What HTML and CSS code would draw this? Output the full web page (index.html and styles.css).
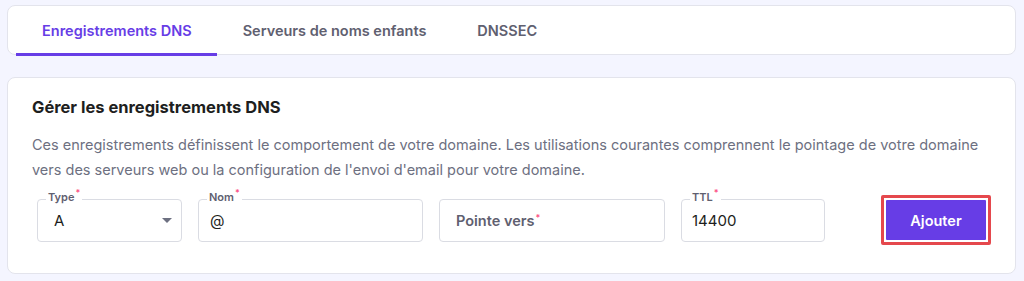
FILE: index.html
```html
<!DOCTYPE html>
<html lang="fr">
<head>
  <meta charset="UTF-8" />
  <meta name="viewport" content="width=device-width, initial-scale=1" />
  <title>DNS</title>
  <link rel="stylesheet" href="styles.css">
</head>
<body>
  <nav class="tabs">
    <a class="tab active">Enregistrements DNS</a>
    <a class="tab">Serveurs de noms enfants</a>
    <a class="tab">DNSSEC</a>
  </nav>

  <section class="card">
    <h2>Gérer les enregistrements DNS</h2>
    <p>Ces enregistrements définissent le comportement de votre domaine. Les utilisations courantes comprennent le pointage de votre domaine vers des serveurs web ou la configuration de l'envoi d'email pour votre domaine.</p>

    <form class="fields">
      <div class="field field-type">
        <span class="label">Type<sup>*</sup></span>
        <span class="value">A</span>
        <svg class="caret" width="10" height="5" viewBox="0 0 10 5"><path d="M0 0h10L5 5z" fill="#6d7081"/></svg>
      </div>
      <div class="field field-name">
        <span class="label">Nom<sup>*</sup></span>
        <span class="value">@</span>
      </div>
      <div class="field field-target">
        <span class="placeholder">Pointe vers<sup>*</sup></span>
      </div>
      <div class="field field-ttl">
        <span class="label">TTL<sup>*</sup></span>
        <span class="value">14400</span>
      </div>
      <div class="btn-wrap">
        <button type="button">Ajouter</button>
      </div>
    </form>
  </section>
</body>
</html>
```

FILE: styles.css
```css
body {
  margin: 0;
  padding: 5px 8px 0 7px;
  background: #f4f5ff;
  font-family: Inter, "Noto Sans", sans-serif;
  color: #1d1e20;
}

.tabs {
  display: flex;
  height: 48px;
  padding: 0 8px;
  background: #fff;
  border: 1px solid #e3e4ec;
  border-radius: 8px;
}

.tab {
  display: flex;
  align-items: center;
  padding: 1px 25px 0 26px;
  font-size: 14.5px;
  font-weight: 600;
  color: #5f6070;
  border-bottom: 3px solid transparent;
  margin-bottom: -2px;
}

.tab.active {
  color: #673de6;
  border-bottom-color: #673de6;
}

.card {
  margin-top: 22px;
  padding: 16px 24px 28px 24px;
  background: #fff;
  border: 1px solid #e3e4ec;
  border-radius: 8px;
}

h2 {
  margin: 0;
  font-size: 16.5px;
  line-height: 26px;
  font-weight: 700;
}

p {
  margin: 12px 0 0;
  font-size: 14.5px;
  line-height: 25px;
  color: #6d7081;
}

.fields {
  display: flex;
  align-items: center;
  margin-top: 13px;
  padding-left: 5px;
  gap: 16px;
}

.field {
  position: relative;
  height: 43px;
  box-sizing: border-box;
  border: 1px solid #dadce3;
  border-radius: 4px;
  display: flex;
  align-items: center;
  padding: 0 16px;
}

.field-type { width: 145px; }
.field-name { width: 225px; padding-left: 11px; }
.field-target { width: 226px; }
.field-ttl { width: 144px; padding-left: 10px; }

.label {
  position: absolute;
  top: -10px;
  left: 8px;
  padding: 0 2px;
  background: #fff;
  font-size: 11px;
  line-height: 14px;
  font-weight: 600;
  color: #5f6070;
}

sup {
  color: #fc5185;
  font-size: 9px;
  line-height: 0;
  vertical-align: 5px;
  margin-left: 1px;
}

.value {
  font-size: 15px;
  color: #1d1e20;
  padding-top: 1px;
}

.placeholder {
  font-size: 14.5px;
  font-weight: 600;
  color: #5f6070;
}

.caret {
  margin-left: auto;
  margin-right: -7px;
  margin-top: 1px;
}

.btn-wrap {
  margin-left: auto;
  padding: 2px;
  background: #fff;
  border: 3px solid #e5484d;
  border-radius: 2px;
}

button {
  display: block;
  width: 100px;
  height: 40px;
  border: none;
  border-radius: 1px;
  background: #673de6;
  color: #fff;
  font-family: inherit;
  font-size: 14.5px;
  font-weight: 600;
}
```
